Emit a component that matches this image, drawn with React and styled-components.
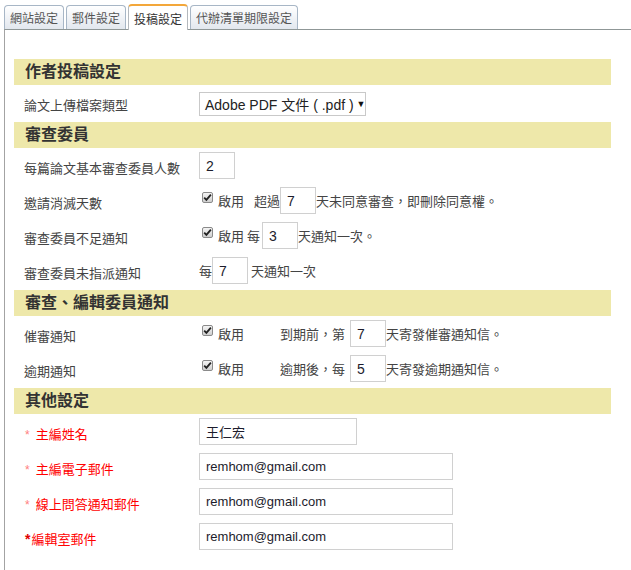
import React from 'react';
import styled, { createGlobalStyle } from 'styled-components';

const GlobalStyle = createGlobalStyle`
  html, body {
    margin: 0;
    padding: 0;
    background: #fff;
  }
  body {
    font-family: "Liberation Sans", "Noto Sans CJK TC", sans-serif;
    font-size: 13px;
    color: #444;
  }
`;

const Page = styled.div`
  padding: 4px 0 0 4px;
  min-height: 566px;
`;

const TabBar = styled.div`
  display: flex;
  align-items: flex-end;
  height: 25px;
  gap: 2px;
`;

const Tab = styled.div`
  box-sizing: border-box;
  height: ${({ $active }) => ($active ? '26px' : '24px')};
  margin-bottom: ${({ $active }) => ($active ? '-1px' : '0')};
  margin-right: ${({ $active }) => ($active ? '0' : '0')};
  padding: 0 5px;
  display: flex;
  align-items: center;
  font-size: 12px;
  color: ${({ $active }) => ($active ? '#333' : '#555')};
  border: 1px solid ${({ $active }) => ($active ? '#b3b8bd' : '#a7b6c6')};
  border-top: ${({ $active }) => ($active ? '2px solid #f3a73a' : '1px solid #a7b6c6')};
  border-bottom: none;
  border-radius: 4px 4px 0 0;
  background: ${({ $active }) =>
    $active ? '#fff' : 'linear-gradient(#ffffff, #e2e7ee)'};
  position: relative;
  z-index: ${({ $active }) => ($active ? 1 : 0)};
  white-space: nowrap;
`;

const Panel = styled.div`
  border-top: 1px solid #8f9797;
  border-left: 1px solid #a3a3a3;
  padding: 29px 20px 12px 9px;
  min-height: 500px;
`;

const Section = styled.section`
  margin-bottom: 2px;
`;

const SectionHeader = styled.h3`
  margin: 0;
  height: 26px;
  line-height: 26px;
  padding-left: 11px;
  background: #eee8aa;
  font-size: 16px;
  font-weight: bold;
  color: #333;
`;

const Row = styled.div`
  display: grid;
  grid-template-columns: 185px 1fr;
  align-items: center;
  height: 35px;
`;

const Label = styled.div`
  padding: 3px 0 0 10px;
  font-size: 13px;
  color: ${({ $required }) => ($required ? '#ff0000' : '#444')};
  white-space: nowrap;
`;

const Star = styled.span`
  color: ${({ $strong }) => ($strong ? '#e00000' : '#ff8080')};
  font-size: ${({ $strong }) => ($strong ? '14px' : '12px')};
  font-weight: ${({ $strong }) => ($strong ? 'bold' : 'normal')};
  margin-left: 1px;
  margin-right: ${({ $strong }) => ($strong ? '1px' : '6px')};
`;

const Controls = styled.div`
  display: flex;
  align-items: center;
  white-space: nowrap;
  font-size: 13px;
  color: #444;
`;

const SelectBox = styled.div`
  box-sizing: border-box;
  width: 167px;
  height: 24px;
  margin-top: 3px;
  border: 1px solid #c9c9c9;
  padding: 0 0 0 5px;
  display: flex;
  align-items: center;
  font-size: 14px;
  color: #222;
`;

const Caret = styled.span`
  font-size: 9px;
  margin-left: 3px;
  color: #111;
`;

const Input = styled.input`
  box-sizing: border-box;
  width: ${({ $w }) => $w}px;
  height: 27px;
  margin-left: ${({ $ml }) => $ml || 0}px;
  margin-right: ${({ $mr }) => $mr || 0}px;
  border: 1px solid #d0d0d0;
  padding: 0 6px;
  font-family: "Liberation Sans", "Noto Sans CJK TC", sans-serif;
  font-size: ${({ $fs }) => $fs || 14}px;
  color: #1c1c2c;
  background: #fff;
  outline: none;
`;

const Text = styled.span`
  margin-left: ${({ $ml }) => $ml || 0}px;
`;

const CheckGroup = styled.span`
  display: inline-flex;
  align-items: center;
  width: ${({ $w }) => ($w ? `${$w}px` : 'auto')};
  flex: none;
`;

const Box = styled.span`
  box-sizing: border-box;
  width: 11px;
  height: 11px;
  margin: 0 5px 6px 3px;
  border: 1px solid #8a8a8a;
  border-radius: 2px;
  background: linear-gradient(#f4f4f4, #cfcfcf);
  display: inline-flex;
  align-items: center;
  justify-content: center;
`;

const Check = ({ w }) => (
  <CheckGroup $w={w}>
    <Box>
      <svg width="9" height="9" viewBox="0 0 9 9">
        <path d="M1.2 4.6 L3.4 6.9 L7.9 1.6" fill="none" stroke="#222" strokeWidth="1.8" />
      </svg>
    </Box>
    <span>啟用</span>
  </CheckGroup>
);

const Required = ({ strong, children }) => (
  <Label $required>
    <Star $strong={strong}>*</Star>
    {children}
  </Label>
);

export default function App() {
  return (
    <>
      <GlobalStyle />
      <Page>
        <TabBar>
          <Tab>網站設定</Tab>
          <Tab>郵件設定</Tab>
          <Tab $active>投稿設定</Tab>
          <Tab>代辦清單期限設定</Tab>
        </TabBar>
        <Panel>
          <Section>
            <SectionHeader>作者投稿設定</SectionHeader>
            <Row>
              <Label>論文上傳檔案類型</Label>
              <Controls>
                <SelectBox>
                  Adobe PDF 文件 ( .pdf )<Caret>▼</Caret>
                </SelectBox>
              </Controls>
            </Row>
          </Section>

          <Section>
            <SectionHeader>審查委員</SectionHeader>
            <Row>
              <Label>每篇論文基本審查委員人數</Label>
              <Controls>
                <Input $w={36} defaultValue="2" />
              </Controls>
            </Row>
            <Row>
              <Label>邀請消滅天數</Label>
              <Controls>
                <Check />
                <Text $ml={10}>超過</Text>
                <Input $w={36} defaultValue="7" />
                <Text>天未同意審查，即刪除同意權。</Text>
              </Controls>
            </Row>
            <Row>
              <Label>審查委員不足通知</Label>
              <Controls>
                <Check />
                <Text $ml={3}>每</Text>
                <Input $w={36} $ml={2} defaultValue="3" />
                <Text>天通知一次。</Text>
              </Controls>
            </Row>
            <Row>
              <Label>審查委員未指派通知</Label>
              <Controls>
                <Text>每</Text>
                <Input $w={36} defaultValue="7" />
                <Text $ml={3}>天通知一次</Text>
              </Controls>
            </Row>
          </Section>

          <Section>
            <SectionHeader>審查、編輯委員通知</SectionHeader>
            <Row>
              <Label>催審通知</Label>
              <Controls>
                <Check w={81} />
                <Text>到期前，第</Text>
                <Input $w={36} $ml={5} defaultValue="7" />
                <Text>天寄發催審通知信。</Text>
              </Controls>
            </Row>
            <Row>
              <Label>逾期通知</Label>
              <Controls>
                <Check w={81} />
                <Text>逾期後，每</Text>
                <Input $w={36} $ml={5} defaultValue="5" />
                <Text>天寄發逾期通知信。</Text>
              </Controls>
            </Row>
          </Section>

          <Section>
            <SectionHeader>其他設定</SectionHeader>
            <Row>
              <Required>主編姓名</Required>
              <Controls>
                <Input $w={158} $fs={13} defaultValue="王仁宏" />
              </Controls>
            </Row>
            <Row>
              <Required>主編電子郵件</Required>
              <Controls>
                <Input $w={254} $fs={13} defaultValue="remhom@gmail.com" />
              </Controls>
            </Row>
            <Row>
              <Required>線上問答通知郵件</Required>
              <Controls>
                <Input $w={254} $fs={13} defaultValue="remhom@gmail.com" />
              </Controls>
            </Row>
            <Row>
              <Required strong>編輯室郵件</Required>
              <Controls>
                <Input $w={254} $fs={13} defaultValue="remhom@gmail.com" />
              </Controls>
            </Row>
          </Section>
        </Panel>
      </Page>
    </>
  );
}
